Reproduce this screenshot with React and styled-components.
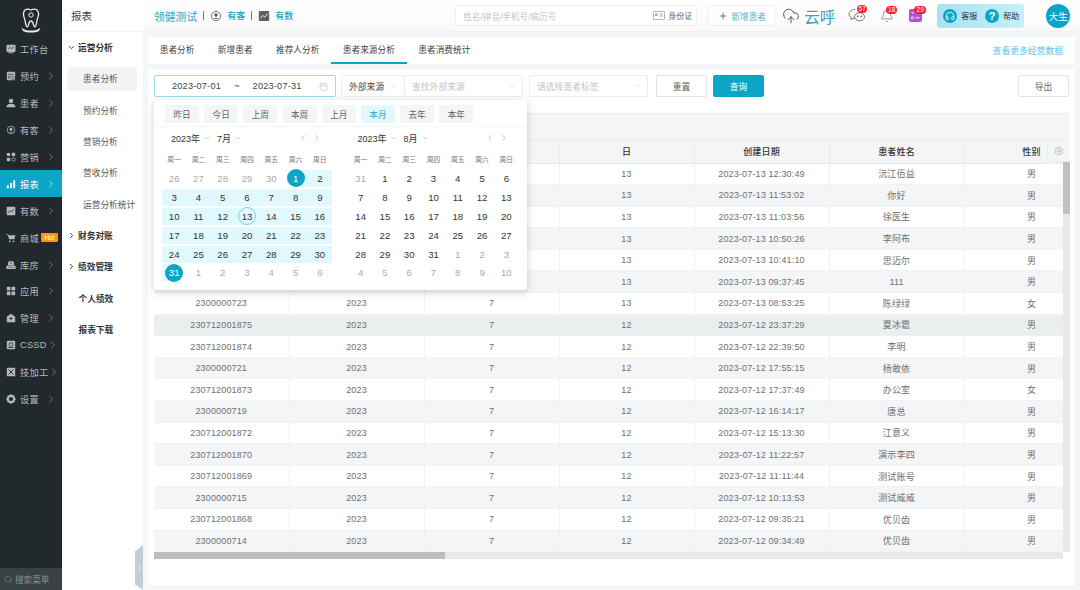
import React from "react";
import styled, { createGlobalStyle } from "styled-components";
import {
  ChevronRight,
  ChevronDown,
  ChevronLeft,
  Search,
  Plus,
  Bell,
  Calendar,
  Settings,
  Headphones,
  CloudUpload,
} from "lucide-react";

const GlobalStyle = createGlobalStyle`
  * { box-sizing: border-box; }
  html, body { margin: 0; padding: 0; height: 590px; overflow: hidden; }
  body {
    font-family: "Liberation Sans", "Noto Sans CJK SC", sans-serif;
    background: #f5f6f8;
    color: #4a4f55;
  }
`;

const TEAL = "#0ba5c8";

const Page = styled.div`
  display: flex;
  width: 1080px;
  height: 590px;
  position: relative;
  overflow: hidden;
`;

const Sidebar = styled.aside`
  width: 62px;
  flex: none;
  background: #22292d;
  display: flex;
  flex-direction: column;
`;

const LogoWrap = styled.div`
  height: 36px;
  display: flex;
  align-items: center;
  justify-content: center;
  padding-top: 4px;
`;

const SideList = styled.nav`
  flex: 1;
  display: flex;
  flex-direction: column;
`;

const SideItem = styled.div`
  height: 26.9px;
  display: flex;
  align-items: center;
  padding-left: 6px;
  font-size: 9.2px;
  letter-spacing: 0.3px;
  white-space: nowrap;
  color: ${(p) => (p.$active ? "#fff" : "#b4b8ba")};
  background: ${(p) => (p.$active ? TEAL : "transparent")};
  svg.ico { flex: none; margin-right: 4px; }
`;

const SideArrow = styled.span`
  display: flex;
  flex: none;
  margin-left: auto;
  margin-right: 5px;
  color: ${(p) => (p.$active ? "#fff" : "#a0a5a8")};
`;

const Hot = styled.span`
  background: #f59a0c;
  color: #fff;
  font-size: 6.5px;
  line-height: 9px;
  width: 17px;
  text-align: center;
  letter-spacing: 0;
  margin-left: 2px;
  border-radius: 1px;
`;

const SideSearch = styled.div`
  height: 22px;
  background: #3a4144;
  display: flex;
  align-items: center;
  padding-left: 4px;
  gap: 2px;
  font-size: 8.6px;
  color: #8b9092;
`;

const SubNav = styled.aside`
  width: 81px;
  flex: none;
  background: #fff;
  display: flex;
  flex-direction: column;
`;

const SubTitle = styled.div`
  height: 32px;
  display: flex;
  align-items: center;
  padding-left: 9px;
  font-size: 10.5px;
  color: #444;
  border-bottom: 1px solid #f4f4f4;
`;

const SubGroup = styled.div`
  height: 31.3px;
  display: flex;
  align-items: center;
  padding-left: ${(p) => (p.$plain ? "16.5px" : "5px")};
  gap: 2px;
  font-size: 8.7px;
  font-weight: 700;
  color: #333;
`;

const SubItem = styled.div`
  height: ${(p) => (p.$active ? "24px" : "31.3px")};
  margin: ${(p) => (p.$active ? "3.6px 6px 3.7px 5px" : "0 6px 0 5px")};
  padding-left: 16px;
  display: flex;
  align-items: center;
  font-size: 8.7px;
  color: #555;
  border-radius: 3px;
  background: ${(p) => (p.$active ? "#f3f3f3" : "transparent")};
  white-space: nowrap;
`;

const Collapse = styled.div`
  position: absolute;
  left: 135px;
  top: 545px;
  width: 8px;
  height: 45px;
  background: #c6ced4;
  clip-path: polygon(0 14%, 100% 0, 100% 100%, 0 88%);
  color: #fff;
  display: flex;
  align-items: center;
  justify-content: center;
`;

const Main = styled.main`
  flex: 1;
  min-width: 0;
  display: flex;
  flex-direction: column;
`;

const TopBar = styled.header`
  height: 32px;
  flex: none;
  background: linear-gradient(#fff, #fafafa);
  border-bottom: 1px solid #f2f2f2;
  display: flex;
  align-items: center;
  padding-left: 11px;
`;

const Brand = styled.span`
  font-size: 10.8px;
  color: #35a3bd;
`;

const BarSep = styled.i`
  width: 1px;
  height: 9px;
  background: #777;
  margin: 0 6px;
`;

const TopLink = styled.span`
  display: flex;
  align-items: center;
  gap: 5px;
  font-size: 9px;
  font-weight: 500;
  color: #2c9fba;
  svg { color: #5a6066; }
`;

const SearchBox = styled.div`
  width: 242px;
  height: 21px;
  margin-left: 162px;
  border: 1px solid #f0f0f0;
  border-radius: 3px;
  background: #fff;
  display: flex;
  align-items: center;
  justify-content: space-between;
  padding: 0 4px 0 7px;
  font-size: 8.6px;
  color: #c4c4c4;
`;

const IdCard = styled.span`
  display: flex;
  align-items: center;
  gap: 3px;
  color: #666;
  font-size: 8px;
`;

const AddBtn = styled.div`
  width: 67px;
  height: 21px;
  margin-left: 11px;
  border: 1px solid #f0f0f0;
  border-radius: 3px;
  background: #fff;
  display: flex;
  align-items: center;
  justify-content: center;
  gap: 4px;
  font-size: 8.6px;
  color: #4fb4cc;
  svg { color: #555; }
`;

const CloudCall = styled.span`
  display: flex;
  align-items: center;
  gap: 4px;
  margin-left: 7px;
  font-size: 15.5px;
  color: #33a2bb;
  svg { color: #444; }
`;

const NoticeIcon = styled.span`
  position: relative;
  display: flex;
  margin-left: ${(p) => p.$gap}px;
  color: #666;
`;

const Badge = styled.b`
  position: absolute;
  top: -3px;
  left: ${(p) => p.$left}px;
  width: ${(p) => p.$w}px;
  height: 8px;
  border-radius: 4px;
  background: #f5222d;
  color: #fff;
  font-size: 6.5px;
  line-height: 8px;
  font-weight: 400;
  text-align: center;
`;

const HelpPill = styled.div`
  width: 87px;
  height: 24px;
  margin-left: 15px;
  border-radius: 3px;
  background: linear-gradient(90deg, #a9e3f1, #c6f0f8);
  display: flex;
  align-items: center;
  padding-left: 6px;
  font-size: 8px;
  color: #333;
`;

const PillRound = styled.span`
  width: 14px;
  height: 14px;
  border-radius: 50%;
  background: #0aa5c6;
  color: #fff;
  font-size: 11px;
  font-weight: 700;
  display: flex;
  align-items: center;
  justify-content: center;
  margin: 0 4px 0 ${(p) => p.$gap || 0}px;
`;

const Avatar = styled.div`
  width: 24px;
  height: 24px;
  margin-left: 22px;
  border-radius: 50%;
  background: ${TEAL};
  color: #fff;
  font-size: 9.5px;
  display: flex;
  align-items: center;
  justify-content: center;
`;

const TabsPanel = styled.div`
  height: 27px;
  flex: none;
  margin: 5px 5px 0;
  background: #fff;
  display: flex;
  align-items: stretch;
  justify-content: space-between;
`;

const Tabs = styled.div`
  display: flex;
`;

const Tab = styled.div`
  padding: 0 11.7px;
  display: flex;
  align-items: center;
  font-size: 8.7px;
  color: #444;
  border-bottom: 2px solid ${(p) => (p.$active ? TEAL : "transparent")};
`;

const MoreLink = styled.span`
  align-self: center;
  margin-right: 12px;
  font-size: 8.8px;
  color: #5bc4ee;
`;

const ContentPanel = styled.section`
  flex: 1;
  margin: 6px 5px 5px;
  background: #fff;
  padding: 5px 5px 0 6px;
  position: relative;
`;

const FilterRow = styled.div`
  height: 22px;
  display: flex;
  align-items: stretch;
  font-size: 8.8px;
`;

const DateRange = styled.div`
  width: 182px;
  flex: none;
  border: 1px solid #9edceb;
  border-radius: 2px;
  display: flex;
  align-items: center;
  padding-left: 17px;
  color: #444;
  white-space: nowrap;
  font-size: 9.2px;
  letter-spacing: 0.2px;
  svg { margin-left: 17px; color: #ccc; flex: none; }
`;

const Tilde = styled.span`
  margin: 0 13px 0 13px;
`;

const SelectBox = styled.div`
  width: ${(p) => p.$w}px;
  margin-left: ${(p) => p.$gap || 0}px;
  border: 1px solid #eceded;
  border-left-width: ${(p) => (p.$joined ? 0 : 1)}px;
  border-radius: 2px;
  display: flex;
  align-items: center;
  justify-content: space-between;
  padding: 0 5px 0 7px;
  color: ${(p) => (p.$ph ? "#c4c4c4" : "#444")};
  svg { color: #c4c8cc; flex: none; }
`;

const Btn = styled.div`
  width: 51px;
  margin-left: ${(p) => p.$gap}px;
  border: 1px solid ${(p) => (p.$primary ? TEAL : "#e3e4e5")};
  border-radius: 2px;
  background: ${(p) => (p.$primary ? TEAL : "#fff")};
  color: ${(p) => (p.$primary ? "#fff" : "#666")};
  display: flex;
  align-items: center;
  justify-content: center;
`;

const TableWrap = styled.div`
  position: absolute;
  left: 6px;
  top: 43px;
  width: 916px;
  height: 446px;
  overflow: hidden;
`;

const GroupBar = styled.div`
  height: 28px;
  background: #f3f5f6;
  border-top: 1px solid #eef0f1;
  border-bottom: 1px solid #e9ebec;
`;

const Table = styled.table`
  width: 945px;
  table-layout: fixed;
  border-collapse: collapse;
  font-size: 9px;
  letter-spacing: 0.15px;
  color: #707070;
  text-align: center;
  col { width: 135px; }
`;

const Th = styled.th`
  height: 22px;
  padding: 0;
  background: #f3f5f6;
  color: #333;
  font-weight: 500;
  border-right: 1px solid #e9ebec;
  border-bottom: 1px solid #e9ebec;
`;

const Tr = styled.tr`
  background: ${(p) => (p.$hover ? "#ebeeef" : p.$odd ? "#f3f5f7" : "#fff")};
`;

const Td = styled.td`
  height: 21.6px;
  padding: 0;
  border-right: 1px solid #f0f1f2;
  border-bottom: 1px solid #f0f1f2;
`;

const GearCell = styled.div`
  position: absolute;
  right: 0;
  top: 28px;
  width: 23px;
  height: 21px;
  background: #f3f5f6;
  border-left: 1px solid #e9ebec;
  border-bottom: 1px solid #e9ebec;
  color: #888;
  display: flex;
  align-items: center;
  justify-content: center;
`;

const VScroll = styled.div`
  position: absolute;
  right: 0;
  top: 49px;
  bottom: 7px;
  width: 7px;
  background: #e8e8e8;
`;

const VThumb = styled.div`
  height: 52px;
  background: #c0c0c0;
`;

const HScroll = styled.div`
  position: absolute;
  left: 0;
  right: 7px;
  bottom: 0;
  height: 7px;
  background: #e8e8e8;
`;

const HThumb = styled.div`
  width: 291px;
  height: 100%;
  background: #bdbdbd;
`;

const Popup = styled.div`
  position: absolute;
  left: 6px;
  top: 30px;
  width: 373px;
  height: 190px;
  background: #fff;
  border-radius: 3px;
  box-shadow: 0 2px 8px rgba(0, 0, 0, 0.18);
  z-index: 3;
`;

const QuickRow = styled.div`
  height: 27px;
  padding: 5px 0 0 11px;
  display: flex;
  gap: 5.2px;
  border-bottom: 1px solid #f5f5f5;
`;

const Quick = styled.span`
  width: 34px;
  height: 18px;
  border-radius: 2px;
  background: ${(p) => (p.$active ? "#e2f8fd" : "#f4f5f6")};
  color: ${(p) => (p.$active ? "#29a9c8" : "#666")};
  font-size: 8.6px;
  display: flex;
  align-items: center;
  justify-content: center;
`;

const Months = styled.div`
  display: flex;
  gap: 16.5px;
  padding-left: 8px;
`;

const Month = styled.div`
  width: 170px;
`;

const MonthHead = styled.div`
  height: 22px;
  display: flex;
  align-items: center;
  padding-left: 9px;
  font-size: 9px;
  color: #333;
  white-space: nowrap;
  svg { color: #bbb; }
`;

const HeadPick = styled.span`
  display: flex;
  align-items: center;
  gap: 3px;
  margin-right: ${(p) => p.$mr || 0}px;
`;

const HeadNav = styled.span`
  margin-left: auto;
  margin-right: 10px;
  display: flex;
  gap: 4px;
  svg { color: #999; }
`;

const WeekRow = styled.div`
  display: grid;
  grid-template-columns: repeat(7, 1fr);
  height: 19px;
  align-items: center;
  text-align: center;
  font-size: 6.8px;
  color: #777;
`;

const DayGrid = styled.div`
  display: grid;
  grid-template-columns: repeat(7, 1fr);
  grid-auto-rows: 18.9px;
  margin-top: 1px;
`;

const RANGE_BG = "#e0f8fe";

const DayCell = styled.div`
  display: flex;
  align-items: center;
  justify-content: center;
  height: 17px;
  align-self: center;
  background: ${(p) =>
    p.$edge === "start"
      ? `linear-gradient(90deg, transparent 50%, ${RANGE_BG} 50%)`
      : p.$edge === "end"
      ? `linear-gradient(90deg, ${RANGE_BG} 50%, transparent 50%)`
      : p.$range
      ? RANGE_BG
      : "transparent"};
`;

const DayNum = styled.span`
  width: 18px;
  height: 18px;
  border-radius: 50%;
  flex: none;
  display: flex;
  align-items: center;
  justify-content: center;
  font-size: 9.6px;
  color: ${(p) => (p.$sel ? "#fff" : p.$out ? "#aaa" : "#333")};
  background: ${(p) => (p.$sel ? TEAL : "transparent")};
  border: ${(p) => (p.$today ? "1px solid #7fd0e4" : "none")};
`;

const ICONS = {
  desk: (
    <>
      <rect x="0.5" y="1" width="11" height="8.5" rx="1" fill="currentColor" />
      <path d="M2.5 6l2-2 2 1.5 3-2" stroke="#22292d" fill="none" strokeWidth="0.8" />
      <rect x="3" y="10" width="6" height="1.2" fill="currentColor" />
    </>
  ),
  book: (
    <>
      <rect x="1" y="1" width="10" height="10" rx="1" fill="currentColor" />
      <path d="M2.5 4h7M2.5 6.5h3M2.5 8.5h3" stroke="#22292d" strokeWidth="0.8" />
      <circle cx="8.5" cy="8.5" r="2" fill="currentColor" stroke="#22292d" strokeWidth="0.6" />
    </>
  ),
  user: (
    <>
      <circle cx="6" cy="3.5" r="2.6" fill="currentColor" />
      <path d="M0.5 11c0-3 2.5-4.2 5.5-4.2s5.5 1.2 5.5 4.2z" fill="currentColor" />
    </>
  ),
  guest: (
    <>
      <circle cx="6" cy="6" r="4.6" fill="none" stroke="currentColor" strokeWidth="0.9" />
      <circle cx="6" cy="5" r="1.8" fill="currentColor" />
      <path d="M3.4 9c.8-1.4 4.4-1.4 5.2 0" fill="currentColor" />
    </>
  ),
  market: (
    <>
      <circle cx="3" cy="3" r="2.2" fill="currentColor" />
      <rect x="7" y="1" width="4" height="4" rx="0.8" fill="currentColor" />
      <rect x="1" y="7" width="4" height="4" rx="0.8" fill="currentColor" />
      <circle cx="9" cy="9" r="2" fill="none" stroke="currentColor" strokeWidth="0.9" />
    </>
  ),
  bars: (
    <>
      <rect x="1" y="7.5" width="2.4" height="3.5" rx="0.4" fill="currentColor" />
      <rect x="4.8" y="4.8" width="2.4" height="6.2" rx="0.4" fill="currentColor" />
      <rect x="8.6" y="1.5" width="2.4" height="9.5" rx="0.4" fill="currentColor" />
    </>
  ),
  trend: (
    <>
      <rect x="0.8" y="1" width="10.4" height="10" rx="1" fill="currentColor" />
      <path d="M2.2 8.5l2.6-3 2 1.6 3-3.6" stroke="#f4f4f4" strokeWidth="0.9" fill="none" />
    </>
  ),
  trendDark: (
    <>
      <rect x="0.8" y="1" width="10.4" height="10" rx="1" fill="currentColor" />
      <path d="M2.2 8.5l2.6-3 2 1.6 3-3.6" stroke="#22292d" strokeWidth="0.9" fill="none" />
    </>
  ),
  cart: (
    <>
      <path d="M0.5 1.2h2l.4 1.4h8.4l-1.2 5H3.8L2 2.2H.5z" fill="currentColor" />
      <circle cx="4.6" cy="10" r="1.1" fill="currentColor" />
      <circle cx="9" cy="10" r="1.1" fill="currentColor" />
    </>
  ),
  store: (
    <>
      <path d="M3 1.5h6l1 5H2z" fill="currentColor" />
      <rect x="0.5" y="6.8" width="11" height="4" rx="0.6" fill="currentColor" />
      <path d="M3 8.8h1.5M5.3 8.8h1.5M7.6 8.8h1.5M4.8 3.6h2.4" stroke="#22292d" strokeWidth="0.8" />
    </>
  ),
  apps: (
    <>
      <rect x="1" y="1" width="4.4" height="4.4" rx="0.8" fill="currentColor" />
      <rect x="6.6" y="1" width="4.4" height="4.4" rx="0.8" fill="currentColor" />
      <rect x="1" y="6.6" width="4.4" height="4.4" rx="0.8" fill="currentColor" />
      <rect x="6.6" y="6.6" width="4.4" height="4.4" rx="0.8" fill="currentColor" />
    </>
  ),
  manage: (
    <>
      <path d="M6 1l5 3.6V11H1V4.6z" fill="currentColor" />
      <path d="M6 4.6v4M4 6.6h4" stroke="#22292d" strokeWidth="1" />
    </>
  ),
  cssd: (
    <>
      <rect x="1" y="1" width="10" height="10" rx="1" fill="currentColor" />
      <circle cx="6" cy="5.4" r="2.3" fill="none" stroke="#22292d" strokeWidth="0.9" />
      <path d="M2.5 9h7" stroke="#22292d" strokeWidth="0.9" />
    </>
  ),
  tool: (
    <>
      <rect x="1" y="1" width="10" height="10" rx="0.6" fill="currentColor" />
      <path d="M3 3l6 6M9 3L3 9" stroke="#22292d" strokeWidth="1.1" />
    </>
  ),
  gear: (
    <>
      <circle cx="6" cy="6" r="3.8" fill="none" stroke="currentColor" strokeWidth="2.6" />
      <path d="M6 .4v2M6 9.6v2M.4 6h2M9.6 6h2M2 2l1.4 1.4M8.6 8.6L10 10M10 2L8.6 3.4M3.4 8.6L2 10" stroke="currentColor" strokeWidth="1.5" />
    </>
  ),
};

const SideIcon = ({ name }) => (
  <svg className="ico" width="10" height="10" viewBox="0 0 12 12">
    {ICONS[name]}
  </svg>
);

const sideItems = [
  { icon: "desk", label: "工作台", arrow: false },
  { icon: "book", label: "预约" },
  { icon: "user", label: "患者" },
  { icon: "guest", label: "有客" },
  { icon: "market", label: "营销" },
  { icon: "bars", label: "报表", active: true },
  { icon: "trendDark", label: "有数" },
  { icon: "cart", label: "商城", hot: true, arrow: false },
  { icon: "store", label: "库房" },
  { icon: "apps", label: "应用" },
  { icon: "manage", label: "管理" },
  { icon: "cssd", label: "CSSD" },
  { icon: "tool", label: "技加工" },
  { icon: "gear", label: "设置" },
];

// the first six rows sit under the date popup, their left cells are not visible
const rows = [
  ["", "13", "2023-07-13 12:30:49", "沅江佰益", "男"],
  ["", "13", "2023-07-13 11:53:02", "你好", "男"],
  ["", "13", "2023-07-13 11:03:56", "徐医生", "男"],
  ["", "13", "2023-07-13 10:50:26", "李阿布", "男"],
  ["", "13", "2023-07-13 10:41:10", "思迈尔", "男"],
  ["", "13", "2023-07-13 09:37:45", "111", "男"],
  ["2300000723", "13", "2023-07-13 08:53:25", "陈绿绿", "女"],
  ["230712001875", "12", "2023-07-12 23:37:29", "夏冰雹", "男"],
  ["230712001874", "12", "2023-07-12 22:39:50", "李明", "男"],
  ["2300000721", "12", "2023-07-12 17:55:15", "杨敢依", "男"],
  ["230712001873", "12", "2023-07-12 17:37:49", "办公室", "女"],
  ["2300000719", "12", "2023-07-12 16:14:17", "唐总", "男"],
  ["230712001872", "12", "2023-07-12 15:13:30", "江意义", "男"],
  ["230712001870", "12", "2023-07-12 11:22:57", "演示李四", "男"],
  ["230712001869", "12", "2023-07-12 11:11:44", "测试账号", "男"],
  ["2300000715", "12", "2023-07-12 10:13:53", "测试威威", "男"],
  ["230712001868", "12", "2023-07-12 09:35:21", "优贝齿", "男"],
  ["2300000714", "12", "2023-07-12 09:34:49", "优贝齿", "男"],
];

const weekNames = ["周一", "周二", "周三", "周四", "周五", "周六", "周日"];

// 6 weeks: leading days of the previous month, then the month, then the next one
const buildDays = (prevFrom, prevLast, total) => {
  const days = [];
  for (let d = prevFrom; d <= prevLast; d++) days.push({ d, out: true });
  for (let d = 1; d <= total; d++) days.push({ d });
  let next = 1;
  while (days.length < 42) days.push({ d: next++, out: true });
  return days;
};

const julyDays = buildDays(26, 30, 31);
const augDays = buildDays(31, 31, 31);

const edgeOf = (x) => {
  if (x.out) return undefined;
  if (x.d === 1) return "start";
  if (x.d === 31) return "end";
  return undefined;
};

const CalMonth = ({ title, days, ranged }) => (
  <Month>
    <MonthHead>
      <HeadPick $mr={6}>
        2023年 <ChevronDown size={8} />
      </HeadPick>
      <HeadPick>
        {title} <ChevronDown size={8} />
      </HeadPick>
      <HeadNav>
        <ChevronLeft size={10} strokeWidth={1.4} />
        <ChevronRight size={10} strokeWidth={1.4} />
      </HeadNav>
    </MonthHead>
    <WeekRow>
      {weekNames.map((w) => (
        <span key={w}>{w}</span>
      ))}
    </WeekRow>
    <DayGrid>
      {days.map((x, i) => (
        <DayCell key={i} $range={ranged && !x.out} $edge={ranged ? edgeOf(x) : undefined}>
          <DayNum
            $out={x.out}
            $sel={ranged && !x.out && (x.d === 1 || x.d === 31)}
            $today={ranged && !x.out && x.d === 13}
          >
            {x.d}
          </DayNum>
        </DayCell>
      ))}
    </DayGrid>
  </Month>
);

const Logo = () => (
  <svg width="22" height="26" viewBox="0 0 22 26">
    <path
      d="M5 3c2-1.6 4-1 6 0 2-1 4-1.6 6 0 2 2 1.6 6 .4 9-.8 2.400-.8 5.600-2 7.400-1 1-1.600-.4-2-2-.4-1.600-.8-3.400-2.400-3.400s-2 1.800-2.400 3.400c-.4 1.600-1 3-2 2-1.200-1.800-1.200-5-2-7.400C3.400 9 3 5 5 3z"
      fill="none"
      stroke="#e8e8e8"
      strokeWidth="1.300"
    />
    <circle cx="11" cy="8" r="2.200" fill="none" stroke="#e8e8e8" strokeWidth="1" />
    <path d="M1.500 20.500c2.500 2.500 5 3 9.500 3s7-.5 9.500-3l-1.500 3.500c-2 1-5 1.500-8 1.500s-6-.5-8-1.500z" fill="#e8e8e8" />
  </svg>
);

const WeChat = () => (
  <svg width="18" height="15" viewBox="0 0 18 15" fill="none" stroke="#666" strokeWidth="0.9">
    <path d="M7 1.500c-3.300 0-6 2-6 4.600 0 1.500.9 2.700 2.200 3.500L2.800 11.500l2.300-1.200c.6.200 1.200.3 1.900.3" />
    <ellipse cx="11.500" cy="8.800" rx="5" ry="4" />
    <circle cx="9.800" cy="8.300" r="0.500" fill="#666" />
    <circle cx="13.200" cy="8.300" r="0.500" fill="#666" />
  </svg>
);

const TodoIcon = () => (
  <svg width="13" height="13" viewBox="0 0 13 13">
    <rect width="13" height="13" rx="2" fill="#b44fd0" />
    <path d="M2.500 3.500l1 1 1.500-1.800" stroke="#fff" fill="none" strokeWidth="0.9" />
    <circle cx="3.500" cy="8.800" r="1.200" fill="none" stroke="#fff" strokeWidth="0.8" />
    <path d="M6.500 3.800h4M6.500 8.800h4" stroke="#fff" strokeWidth="1" />
  </svg>
);

const IdIcon = () => (
  <svg width="12" height="9" viewBox="0 0 12 9" fill="none" stroke="#888" strokeWidth="0.7">
    <rect x="0.400" y="0.400" width="11.200" height="8.200" rx="0.800" />
    <rect x="2" y="2.500" width="2.600" height="2.400" fill="#aaa" stroke="none" />
    <path d="M6.500 3h3.500M6.500 5h3.500" />
  </svg>
);

const TopIcon = ({ name }) => (
  <svg width="12" height="12" viewBox="0 0 12 12">
    {ICONS[name]}
  </svg>
);

const App = () => (
  <Page>
    <GlobalStyle />
    <Sidebar>
      <LogoWrap>
        <Logo />
      </LogoWrap>
      <SideList>
        {sideItems.map((it) => (
          <SideItem key={it.label} $active={it.active}>
            <SideIcon name={it.icon} />
            {it.label}
            {it.hot && <Hot>Hot</Hot>}
            {it.arrow !== false && (
              <SideArrow $active={it.active}>
                <ChevronRight size={12} strokeWidth={1.2} />
              </SideArrow>
            )}
          </SideItem>
        ))}
      </SideList>
      <SideSearch>
        <Search size={9} strokeWidth={1.2} />
        搜索菜单
      </SideSearch>
    </Sidebar>

    <SubNav>
      <SubTitle>报表</SubTitle>
      <SubGroup>
        <ChevronDown size={9} strokeWidth={2.4} />
        运营分析
      </SubGroup>
      <SubItem $active>患者分析</SubItem>
      <SubItem>预约分析</SubItem>
      <SubItem>营销分析</SubItem>
      <SubItem>营收分析</SubItem>
      <SubItem>运营分析统计</SubItem>
      <SubGroup>
        <ChevronRight size={9} strokeWidth={2.4} />
        财务对账
      </SubGroup>
      <SubGroup>
        <ChevronRight size={9} strokeWidth={2.4} />
        绩效管理
      </SubGroup>
      <SubGroup $plain>个人绩效</SubGroup>
      <SubGroup $plain>报表下载</SubGroup>
    </SubNav>
    <Collapse>
      <ChevronLeft size={8} />
    </Collapse>

    <Main>
      <TopBar>
        <Brand>领健测试</Brand>
        <BarSep />
        <TopLink>
          <TopIcon name="guest" />
          有客
        </TopLink>
        <BarSep />
        <TopLink>
          <TopIcon name="trend" />
          有数
        </TopLink>
        <SearchBox>
          姓名/拼音/手机号/病历号
          <IdCard>
            <IdIcon />
            身份证
          </IdCard>
        </SearchBox>
        <AddBtn>
          <Plus size={10} />
          新增患者
        </AddBtn>
        <CloudCall>
          <CloudUpload size={18} strokeWidth={1.2} />
          云呼
        </CloudCall>
        <NoticeIcon $gap={13}>
          <WeChat />
          <Badge $left={9} $w={10}>
            57
          </Badge>
        </NoticeIcon>
        <NoticeIcon $gap={14}>
          <Bell size={14} strokeWidth={1.2} />
          <Badge $left={6} $w={11}>
            18
          </Badge>
        </NoticeIcon>
        <NoticeIcon $gap={15}>
          <TodoIcon />
          <Badge $left={5} $w={12}>
            29
          </Badge>
        </NoticeIcon>
        <HelpPill>
          <PillRound>
            <Headphones size={10} />
          </PillRound>
          客服
          <PillRound $gap={8}>?</PillRound>
          帮助
        </HelpPill>
        <Avatar>大生</Avatar>
      </TopBar>

      <TabsPanel>
        <Tabs>
          <Tab>患者分析</Tab>
          <Tab>新增患者</Tab>
          <Tab>推荐人分析</Tab>
          <Tab $active>患者来源分析</Tab>
          <Tab>患者消费统计</Tab>
        </Tabs>
        <MoreLink>查看更多经营数据</MoreLink>
      </TabsPanel>

      <ContentPanel>
        <FilterRow>
          <DateRange>
            2023-07-01
            <Tilde>~</Tilde>
            2023-07-31
            <Calendar size={9} />
          </DateRange>
          <SelectBox $w={64} $gap={5}>
            外部来源 <ChevronDown size={10} strokeWidth={1.2} />
          </SelectBox>
          <SelectBox $w={118} $ph $joined>
            查找外部来源 <ChevronDown size={10} strokeWidth={1.2} />
          </SelectBox>
          <SelectBox $w={119} $gap={6} $ph>
            请选择患者标签 <ChevronDown size={10} strokeWidth={1.2} />
          </SelectBox>
          <Btn $gap={8}>重置</Btn>
          <Btn $gap={6} $primary>
            查询
          </Btn>
          <Btn $gap={254}>导出</Btn>
        </FilterRow>

        <Popup>
          <QuickRow>
            {["昨日", "今日", "上周", "本周", "上月", "本月", "去年", "本年"].map((q) => (
              <Quick key={q} $active={q === "本月"}>
                {q}
              </Quick>
            ))}
          </QuickRow>
          <Months>
            <CalMonth title="7月" days={julyDays} ranged />
            <CalMonth title="8月" days={augDays} />
          </Months>
        </Popup>

        <TableWrap>
          <GroupBar />
          <Table>
            <colgroup>
              <col />
              <col />
              <col />
              <col />
              <col />
              <col />
              <col />
            </colgroup>
            <thead>
              <tr>
                <Th />
                <Th />
                <Th />
                <Th>日</Th>
                <Th>创建日期</Th>
                <Th>患者姓名</Th>
                <Th>性别</Th>
              </tr>
            </thead>
            <tbody>
              {rows.map((r, i) => (
                <Tr key={i} $odd={i % 2 === 1} $hover={i === 7}>
                  <Td>{r[0]}</Td>
                  <Td>{i > 5 && "2023"}</Td>
                  <Td>{i > 5 && "7"}</Td>
                  <Td>{r[1]}</Td>
                  <Td>{r[2]}</Td>
                  <Td>{r[3]}</Td>
                  <Td>{r[4]}</Td>
                </Tr>
              ))}
            </tbody>
          </Table>
          <GearCell>
            <Settings size={10} strokeWidth={1.1} />
          </GearCell>
          <VScroll>
            <VThumb />
          </VScroll>
          <HScroll>
            <HThumb />
          </HScroll>
        </TableWrap>
      </ContentPanel>
    </Main>
  </Page>
);

export default App;
